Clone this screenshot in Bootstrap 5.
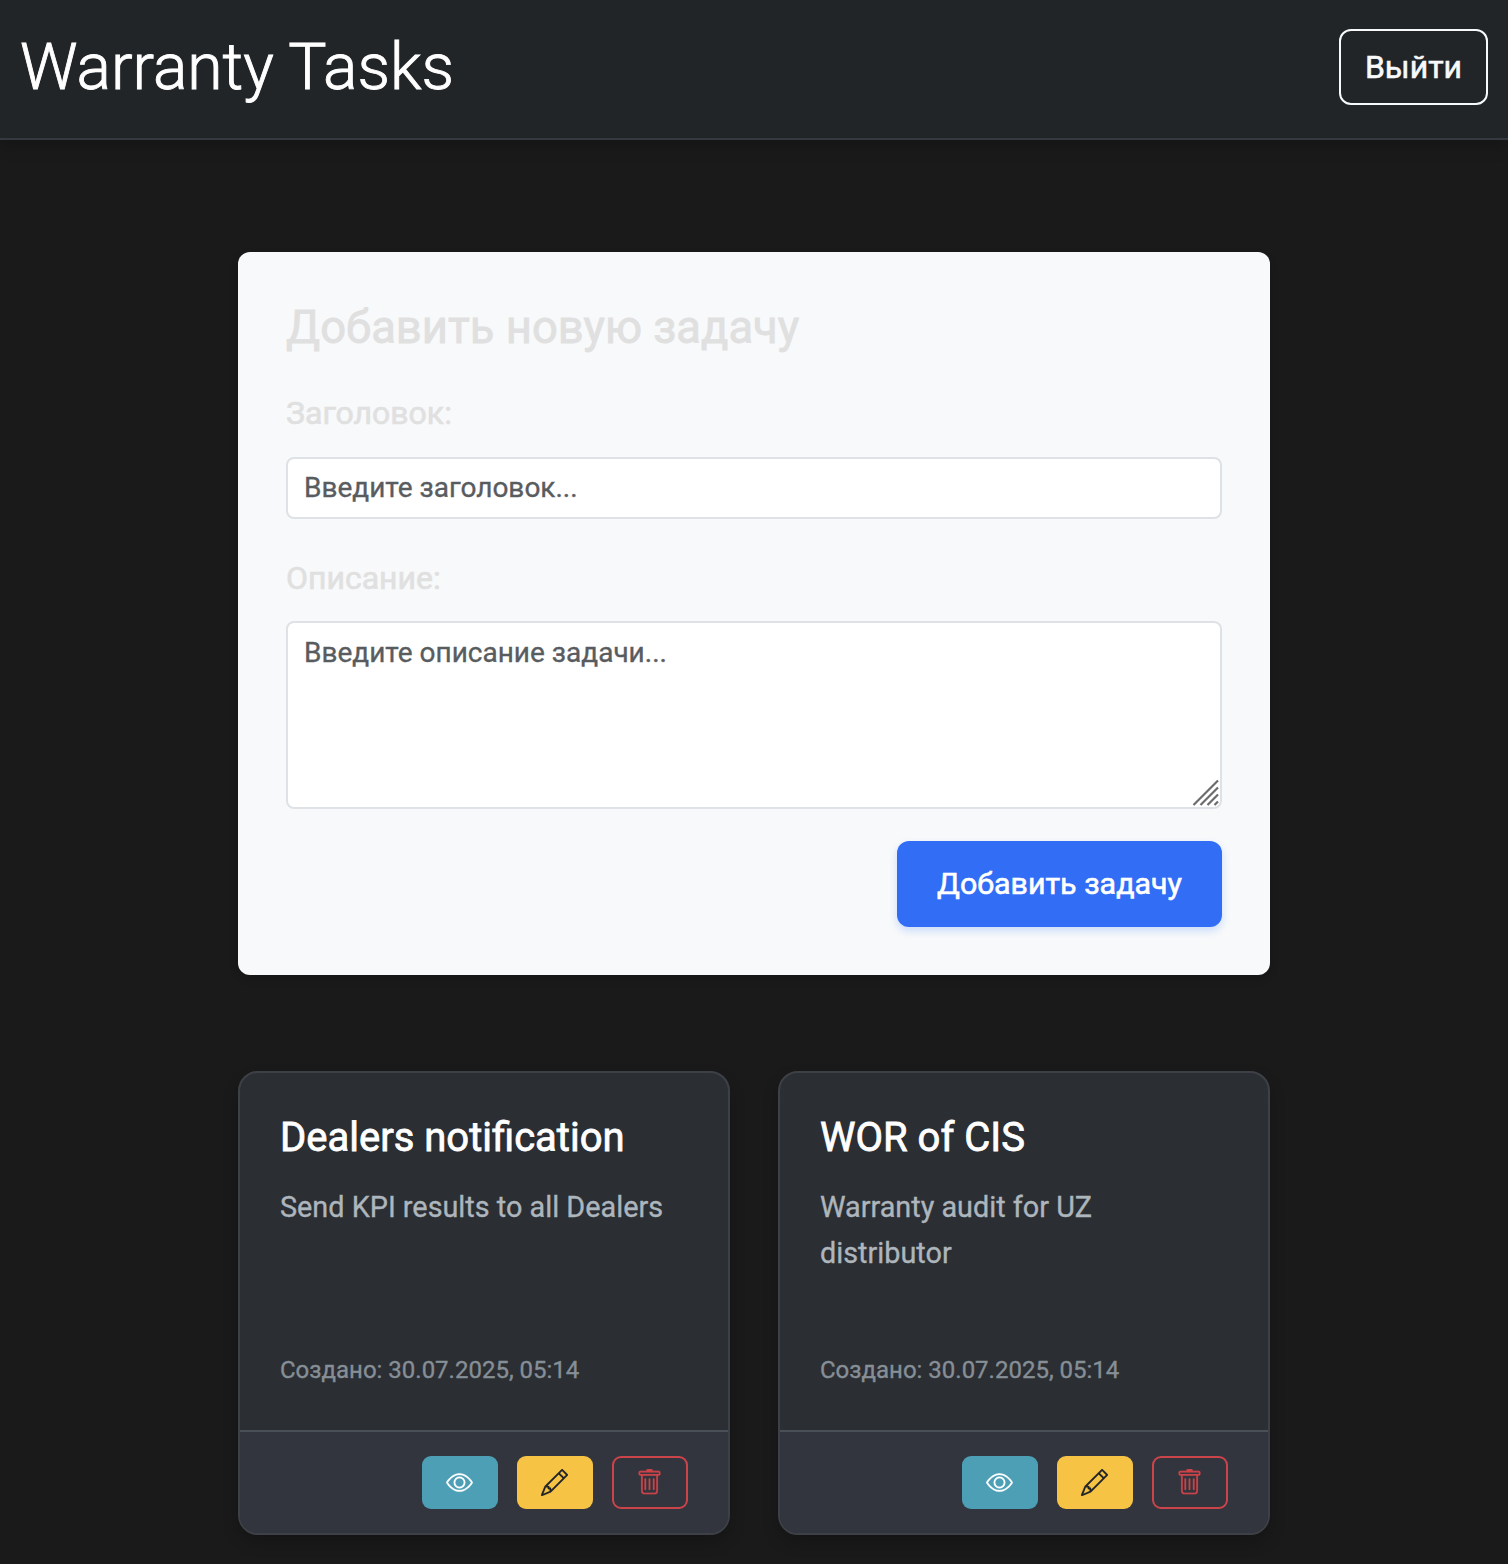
<!DOCTYPE html>
<html lang="ru">
<head>
<meta charset="utf-8">
<meta name="viewport" content="width=device-width, initial-scale=1">
<title>Warranty Tasks</title>
<link rel="stylesheet" href="https://cdn.jsdelivr.net/npm/bootstrap@5.3.0/dist/css/bootstrap.min.css">
<style>
body { background: #1a1a1a; color: #e0e0e0; font-family: Roboto, "Liberation Sans", sans-serif; font-size: 32px; line-height: 1.6; height: 1564px; overflow: hidden; -webkit-text-stroke: .35px currentColor; }
.top-bar { height: 140px; background: #212528; border-bottom: 2px solid #343a40; padding: 0 20px; padding-bottom: 4px; box-shadow: 0 4px 16px rgba(0,0,0,.25); }
.site-title { font-size: 64.2px; font-weight: 300; line-height: 1.2; color: #fff; padding-top: 2px; -webkit-text-stroke-width: .9px; }
.btn-exit { font-size: 32px; font-weight: 400; line-height: 48px; padding: 12px 24px; border: 2px solid #f8f9fa; border-radius: 12px; -webkit-text-stroke-width: .6px; }
.page-wrap { width: 1032px; margin-top: 112px; }
.form-panel { background: #f8f9fa; border-radius: 12px; padding: 48px; height: 723px; box-shadow: 0 4px 8px rgba(0,0,0,.15); }
.form-panel h2 { font-size: 45.4px; font-weight: 400; line-height: 54px; margin-bottom: 32px; padding-top: 1px; -webkit-text-stroke-width: .8px; }
.form-panel .form-label { display: block; font-size: 32px; font-weight: 400; line-height: 52px; margin-bottom: 18px; -webkit-text-stroke-width: .6px; }
.form-panel .form-control { font-size: 28px; line-height: 42px; padding: 8px 16px; border: 2px solid #dee2e6; border-radius: 8px; background: #fff; resize: none; display: block; }
.form-panel textarea.form-control { padding: 9px 16px 7px; }
.form-panel .form-control::placeholder { color: #595c5f; }
.field-title { margin-bottom: 33px; }
.field-title + .form-label { margin-bottom: 17px; }
.grip { right: 3px; bottom: 3px; }
.btn-add { background: #326df5; color: #fff; font-size: 30.4px; font-weight: 400; line-height: 46px; padding: 20px 0; border: 0; border-radius: 12px; width: 325px; white-space: nowrap; box-shadow: 0 4px 8px rgba(13,110,253,.2); -webkit-text-stroke-width: .6px; }
.task-grid { gap: 48px; margin-top: 96px; }
.task-card { flex: 1 1 0; height: 464px; background: #2b2e33; border: 2px solid #3d4147; border-radius: 20px; box-shadow: 0 8px 16px rgba(0,0,0,.2); overflow: hidden; }
.task-card .card-body { padding: 40px; }
.task-card h5 { font-size: 40px; font-weight: 400; line-height: 48px; color: #fff; margin-bottom: 22px; padding-top: 1px; -webkit-text-stroke-width: .8px; }
.task-text { font-size: 28.8px; line-height: 46px; color: #adb5bd; }
.task-date { font-size: 24px; line-height: 38px; color: #868e96; margin-bottom: 1px; }
.task-card .card-footer { height: 103px; background: #32353d; border-top: 2px solid #495057; padding: 24px 40px; gap: 19px; border-radius: 0; }
.btn-act { width: 76px; height: 53px; padding: 0 1px 1px 0; border: 0; border-radius: 9px; }
.btn-view { background: #4d9fb6; color: #fff; }
.btn-edit { background: #f6c344; color: #212529; }
.btn-del { border: 2px solid #cb444a; color: #cb444a; }
.btn-act use { stroke: currentColor; stroke-width: .1; }
</style>
<script src="https://cdn.jsdelivr.net/npm/bootstrap@5.3.0/dist/js/bootstrap.bundle.min.js"></script>
</head>
<body>
<svg class="d-none" xmlns="http://www.w3.org/2000/svg">
  <symbol id="i-eye" viewBox="0 0 16 16"><path d="M16 8s-3-5.5-8-5.5S0 8 0 8s3 5.5 8 5.5S16 8 16 8M1.173 8a13 13 0 0 1 1.66-2.043C4.12 4.668 5.88 3.5 8 3.5s3.879 1.168 5.168 2.457A13 13 0 0 1 14.828 8q-.086.13-.195.288c-.335.48-.83 1.12-1.465 1.755C11.879 11.332 10.119 12.5 8 12.5s-3.879-1.168-5.168-2.457A13 13 0 0 1 1.172 8z"/><path d="M8 5.5a2.500 2.500 0 1 0 0 5 2.500 2.500 0 0 0 0-5M4.500 8a3.500 3.500 0 1 1 7 0 3.500 3.500 0 0 1-7 0"/></symbol>
  <symbol id="i-pencil" viewBox="0 0 16 16"><path d="M12.146.146a.5.5 0 0 1 .708 0l3 3a.5.5 0 0 1 0 .708l-10 10a.5.5 0 0 1-.168.11l-5 2a.5.5 0 0 1-.65-.65l2-5a.5.5 0 0 1 .11-.168zM11.207 2.500 13.500 4.793 14.793 3.500 12.500 1.207zm1.586 3L10.500 3.207 4 9.707V10h.5a.5.5 0 0 1 .5.5v.5h.5a.5.5 0 0 1 .5.5v.5h.293zm-9.761 5.175-.106.106-1.528 3.821 3.821-1.528.106-.106A.5.5 0 0 1 5 12.500V12h-.5a.5.5 0 0 1-.5-.5V11h-.5a.5.5 0 0 1-.468-.325"/></symbol>
  <symbol id="i-trash" viewBox="0 0 16 16"><path d="M5.500 5.500A.5.5 0 0 1 6 6v6a.5.5 0 0 1-1 0V6a.5.5 0 0 1 .5-.5m2.500 0a.5.5 0 0 1 .5.5v6a.5.5 0 0 1-1 0V6a.5.5 0 0 1 .5-.5m3 .5a.5.5 0 0 0-1 0v6a.5.5 0 0 0 1 0z"/><path d="M14.500 3a1 1 0 0 1-1 1H13v9a2 2 0 0 1-2 2H5a2 2 0 0 1-2-2V4h-.5a1 1 0 0 1-1-1V2a1 1 0 0 1 1-1H6a1 1 0 0 1 1-1h2a1 1 0 0 1 1 1h3.500a1 1 0 0 1 1 1zM4.118 4 4 4.059V13a1 1 0 0 0 1 1h6a1 1 0 0 0 1-1V4.059L11.882 4zM2.500 3h11V2h-11z"/></symbol>
</svg>
<header class="top-bar d-flex justify-content-between align-items-center">
  <h1 class="site-title m-0">Warranty Tasks</h1>
  <button class="btn btn-outline-light btn-exit" type="button">Выйти</button>
</header>
<main class="page-wrap mx-auto">
  <form class="form-panel">
    <h2>Добавить новую задачу</h2>
    <div class="field-title">
      <label class="form-label" for="t">Заголовок:</label>
      <input class="form-control" id="t" type="text" placeholder="Введите заголовок...">
    </div>
    <label class="form-label" for="d">Описание:</label>
    <div class="position-relative">
      <textarea class="form-control" id="d" rows="4" placeholder="Введите описание задачи..."></textarea>
      <svg class="grip position-absolute" width="27" height="27" viewBox="0 0 27 27" stroke="#6c6c6c" stroke-width="2.2" fill="none"><path d="M1.500 26 26 1.500M8.500 26 26 8.500M15.500 26 26 15.500M22.500 26 26 22.500"/></svg>
    </div>
    <div class="d-flex justify-content-end mt-4 pt-2"><button class="btn btn-add" type="button">Добавить задачу</button></div>
  </form>
  <section class="task-grid d-flex">
    <article class="card task-card">
      <div class="card-body d-flex flex-column">
        <h5 class="card-title">Dealers notification</h5>
        <p class="task-text m-0">Send KPI results to all Dealers</p>
        <p class="task-date mt-auto">Создано: 30.07.2025, 05:14</p>
      </div>
      <div class="card-footer d-flex justify-content-end">
        <button class="btn btn-act btn-view d-flex align-items-center justify-content-center" type="button" aria-label="Просмотр"><svg width="27" height="27" fill="currentColor"><use href="#i-eye"/></svg></button>
        <button class="btn btn-act btn-edit d-flex align-items-center justify-content-center" type="button" aria-label="Изменить"><svg width="27" height="27" fill="currentColor"><use href="#i-pencil"/></svg></button>
        <button class="btn btn-act btn-del d-flex align-items-center justify-content-center" type="button" aria-label="Удалить"><svg width="27" height="27" fill="currentColor"><use href="#i-trash"/></svg></button>
      </div>
    </article>
    <article class="card task-card">
      <div class="card-body d-flex flex-column">
        <h5 class="card-title">WOR of CIS</h5>
        <p class="task-text m-0">Warranty audit for UZ<br>distributor</p>
        <p class="task-date mt-auto">Создано: 30.07.2025, 05:14</p>
      </div>
      <div class="card-footer d-flex justify-content-end">
        <button class="btn btn-act btn-view d-flex align-items-center justify-content-center" type="button" aria-label="Просмотр"><svg width="27" height="27" fill="currentColor"><use href="#i-eye"/></svg></button>
        <button class="btn btn-act btn-edit d-flex align-items-center justify-content-center" type="button" aria-label="Изменить"><svg width="27" height="27" fill="currentColor"><use href="#i-pencil"/></svg></button>
        <button class="btn btn-act btn-del d-flex align-items-center justify-content-center" type="button" aria-label="Удалить"><svg width="27" height="27" fill="currentColor"><use href="#i-trash"/></svg></button>
      </div>
    </article>
  </section>
</main>
</body>
</html>
